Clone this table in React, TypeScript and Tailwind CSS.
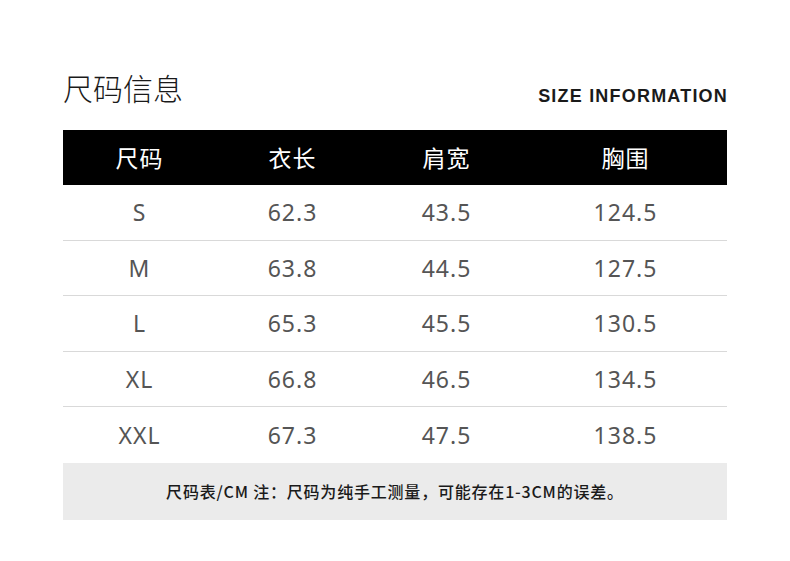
import React from "react";

const rows = [
  ["S", "62.3", "43.5", "124.5"],
  ["M", "63.8", "44.5", "127.5"],
  ["L", "65.3", "45.5", "130.5"],
  ["XL", "66.8", "46.5", "134.5"],
  ["XXL", "67.3", "47.5", "138.5"],
];

const cols = "grid grid-cols-[153px_153px_155px_203px]";
const font = { fontFamily: '"Noto Sans", "Noto Sans CJK SC", sans-serif' };

export default function App() {
  return (
    <div className="w-[790px] h-[561px] bg-white pt-[70px] px-[63px]" style={font}>
      <div className="flex items-end justify-between h-[60px]">
        <div className="text-[30px] leading-[40px] text-[#1a1a1a] mb-[23px]" style={{ fontFamily: '"Noto Sans CJK SC", sans-serif', fontWeight: 300 }}>
          尺码信息
        </div>
        <div className="text-[18px] font-bold text-[#1a1a1a] mb-[20px] tracking-[1.2px] -mr-[1px]" style={{ fontFamily: '"Liberation Sans", Arial, sans-serif' }}>
          SIZE INFORMATION
        </div>
      </div>
      <div className="w-[664px]">
        <div className={`${cols} h-[55px] bg-black text-white text-[23px] items-center`} style={{ fontFamily: '"Noto Sans CJK SC", sans-serif' }}>
          {["尺码", "衣长", "肩宽", "胸围"].map((h) => (
            <div key={h} className="text-center tracking-[1px]">{h}</div>
          ))}
        </div>
        {rows.map((r, i) => (
          <div
            key={r[0]}
            className={`${cols} h-[55.6px] items-center text-[23px] tracking-[1px] text-[#555] ${i < rows.length - 1 ? "border-b border-[#d9d9d9]" : ""}`}
          >
            {r.map((c, j) => (
              <div key={j} className="text-center">{c}</div>
            ))}
          </div>
        ))}
        <div className="h-[57px] bg-[#ebebeb] flex items-center justify-center text-[16px] tracking-[0.8px] font-medium text-[#1a1a1a]" style={{ fontFamily: '"Noto Sans CJK SC", sans-serif' }}>
          尺码表/CM 注：尺码为纯手工测量，可能存在1-3CM的误差。
        </div>
      </div>
    </div>
  );
}
